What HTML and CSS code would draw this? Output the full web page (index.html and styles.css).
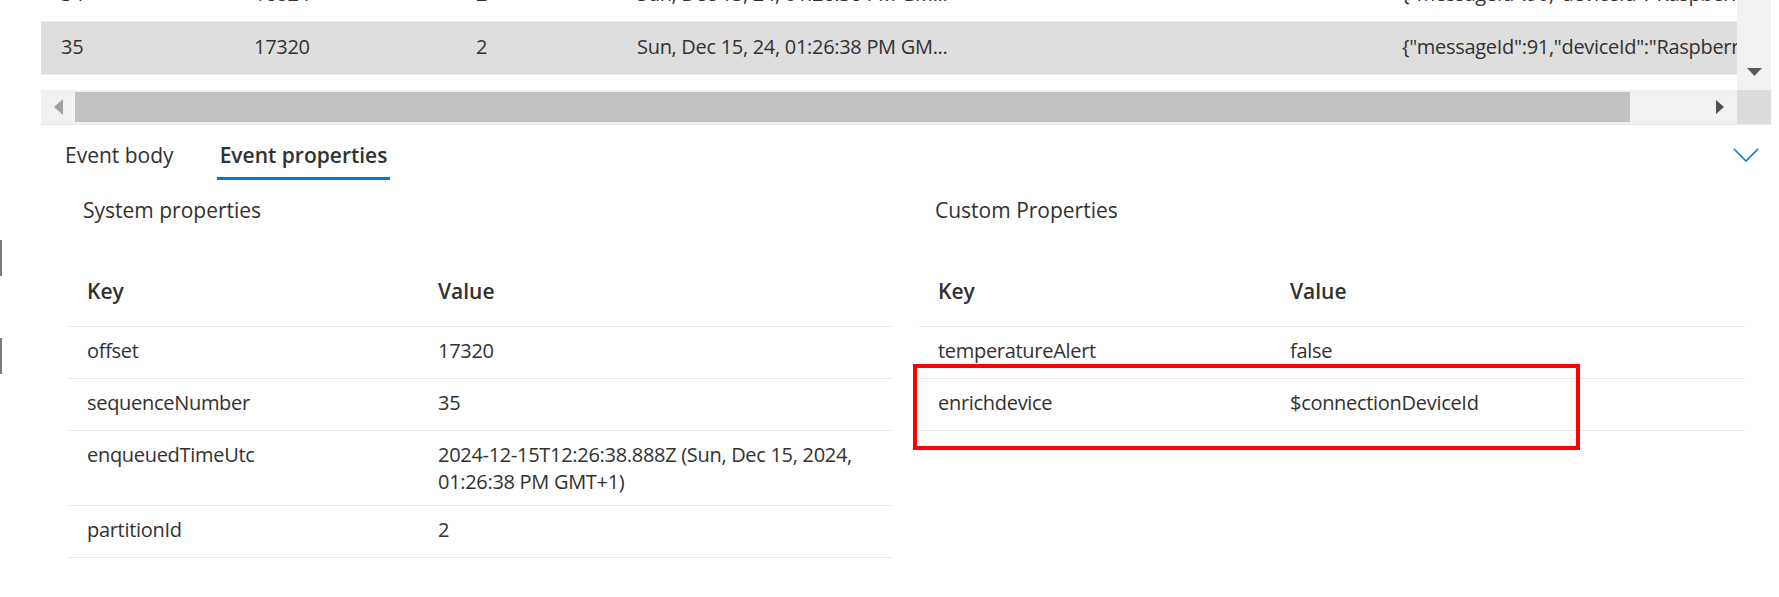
FILE: index.html
```html
<!DOCTYPE html>
<html lang="en">
<head>
<meta charset="utf-8">
<title>Event properties</title>
<link rel="stylesheet" href="styles.css">
</head>
<body>
<div class="page">
  <div class="gutter">
    <span class="mark mark-a"></span>
    <span class="mark mark-b"></span>
  </div>
  <div class="main">
    <div class="grid">
      <div class="grid-body">
        <div class="viewport">
          <div class="grow prev">
            <div class="gc c1">34</div>
            <div class="gc c2">16824</div>
            <div class="gc c3">2</div>
            <div class="gc c4">Sun, Dec 15, 24, 01:26:36 PM GM...</div>
            <div class="gc c5">{"messageId":90,"deviceId":"Raspberry Pi Web Client","temperature":26.3,"humidity":71.2}</div>
          </div>
          <div class="grow selected">
            <div class="gc c1">35</div>
            <div class="gc c2">17320</div>
            <div class="gc c3">2</div>
            <div class="gc c4">Sun, Dec 15, 24, 01:26:38 PM GM...</div>
            <div class="gc c5">{"messageId":91,"deviceId":"Raspberry Pi Web Client","temperature":27.1,"humidity":70.4}</div>
          </div>
        </div>
        <div class="vscroll">
          <svg class="arrow-down" width="15" height="8" viewBox="0 0 15 8"><polygon points="0,0 15,0 7.5,8" fill="#5a5a5a"/></svg>
        </div>
      </div>
      <div class="hscroll">
        <div class="hbtn">
          <svg width="9" height="16" viewBox="0 0 9 16"><polygon points="9,0 9,16 0,8" fill="#a3a3a3"/></svg>
        </div>
        <div class="htrack"><div class="hthumb"></div></div>
        <div class="hbtn">
          <svg width="8" height="14" viewBox="0 0 8 14"><polygon points="0,0 8,7 0,14" fill="#505050"/></svg>
        </div>
        <div class="corner"></div>
      </div>
    </div>

    <div class="tabs">
      <div class="tablist">
        <button class="tab">Event body</button>
        <button class="tab active">Event properties</button>
      </div>
      <svg class="chevron" width="26" height="14" viewBox="0 0 26 14"><polyline points="0.8,0.8 13,13 25.2,0.8" fill="none" stroke="#0078d4" stroke-width="1.6"/></svg>
    </div>

    <div class="props">
      <section class="panel">
        <h3 class="panel-title">System properties</h3>
        <div class="ptable">
          <div class="prow head"><div class="pc">Key</div><div class="pc">Value</div></div>
          <div class="prow"><div class="pc">offset</div><div class="pc">17320</div></div>
          <div class="prow"><div class="pc">sequenceNumber</div><div class="pc">35</div></div>
          <div class="prow"><div class="pc">enqueuedTimeUtc</div><div class="pc">2024-12-15T12:26:38.888Z (Sun, Dec 15, 2024, 01:26:38 PM GMT+1)</div></div>
          <div class="prow"><div class="pc">partitionId</div><div class="pc">2</div></div>
        </div>
      </section>
      <section class="panel">
        <h3 class="panel-title">Custom Properties</h3>
        <div class="ptable custom">
          <div class="prow head"><div class="pc">Key</div><div class="pc">Value</div></div>
          <div class="prow"><div class="pc">temperatureAlert</div><div class="pc">false</div></div>
          <div class="prow"><div class="pc">enrichdevice</div><div class="pc">$connectionDeviceId</div></div>
          <div class="highlight"></div>
        </div>
      </section>
    </div>
  </div>
</div>
</body>
</html>
```

FILE: styles.css
```css
* { box-sizing: border-box; }

html, body {
  margin: 0;
  padding: 0;
  background: #ffffff;
}

body {
  font-family: "Segoe UI", "Open Sans", "Noto Sans", sans-serif;
  font-size: 21px;
  line-height: 27px;
  color: #323130;
  width: 1779px;
  height: 597px;
  overflow: hidden;
}

.page {
  display: flex;
  height: 597px;
}

/* left window edge marks */
.gutter {
  width: 41px;
  flex: none;
  display: flex;
  flex-direction: column;
}
.mark {
  display: block;
  width: 2px;
  height: 36px;
  background: #7a7a7a;
}
.mark-a { margin-top: 240px; }
.mark-b { margin-top: 62px; }

.main {
  flex: 1;
  min-width: 0;
  padding-right: 8px;
  display: flex;
  flex-direction: column;
}

/* ---------- data grid ---------- */
.grid {
  border-bottom: 1px solid #e6e6e6;
}
.grid-body {
  display: flex;
  height: 90px;
}
.viewport {
  flex: 1;
  min-width: 0;
  overflow: hidden;
}
.grow {
  display: grid;
  grid-template-columns: 193px 222px 161px 765px 1fr;
  height: 53px;
  border-bottom: 1px solid #ececec;
  align-items: center;
  padding-bottom: 3px;
  white-space: nowrap;
  font-size: 20px;
  letter-spacing: -0.3px;
}
.grow.prev { margin-top: -31px; }
.grow.selected { background: #dedede; }
.gc {
  padding-left: 20px;
  overflow: hidden;
}
.gc.c5 { overflow: visible; }

.vscroll {
  width: 34px;
  flex: none;
  background: #f1f1f1;
  display: flex;
  flex-direction: column;
  justify-content: flex-end;
  align-items: center;
  padding-bottom: 14px;
}
.arrow-down { display: block; }

.hscroll {
  display: flex;
  height: 34px;
  background: #f1f1f1;
}
.hbtn {
  width: 34px;
  flex: none;
  display: flex;
  align-items: center;
  justify-content: center;
}
.hbtn svg { display: block; }
.htrack {
  flex: 1;
  padding: 2px 73px 2px 0;
}
.hthumb {
  height: 30px;
  background: #c1c1c1;
}
.corner {
  width: 34px;
  flex: none;
  background: #dcdcdc;
}

/* ---------- tabs ---------- */
.tabs {
  display: flex;
  justify-content: space-between;
  align-items: flex-start;
  padding-left: 21px;
}
.tablist {
  display: flex;
  gap: 40px;
}
.tab {
  font: inherit;
  color: #323130;
  background: none;
  border: 0;
  border-bottom: 3px solid transparent;
  padding: 17px 3px 8px;
  margin: 0;
  cursor: pointer;
}
.tab.active {
  font-weight: 600;
  border-bottom-color: #0078d4;
}
.chevron {
  display: block;
  margin-top: 23px;
  margin-right: 12px;
}

/* ---------- properties ---------- */
.props {
  display: flex;
  gap: 26px;
  padding: 0 26px;
}
.panel {
  flex: 1;
  min-width: 0;
}
.panel-title {
  margin: 17px 0 0;
  padding-left: 16px;
  font-size: 21px;
  font-weight: 400;
  line-height: 27px;
}
.ptable {
  margin-top: 44px;
  position: relative;
  font-size: 20px;
  letter-spacing: -0.3px;
}
.prow {
  display: grid;
  grid-template-columns: 351px 1fr;
  padding: 10px 0;
  min-height: 52px;
  border-bottom: 1px solid #e8e8e8;
}
.prow.head {
  font-size: 21px;
  letter-spacing: 0;
  font-weight: 600;
  padding-bottom: 21px;
  min-height: 0;
}
.pc {
  padding-left: 20px;
  padding-right: 6px;
}
.custom .pc:first-child { padding-left: 19px; }

/* annotation box */
.highlight {
  position: absolute;
  left: -6px;
  top: 96px;
  width: 667px;
  height: 86px;
  border: 4px solid #ff0000;
  pointer-events: none;
}
```
